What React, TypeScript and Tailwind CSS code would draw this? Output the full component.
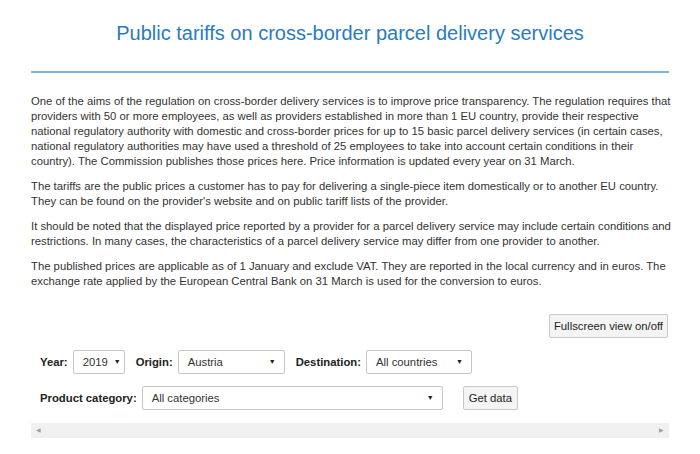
import { ReactNode } from "react";

function Select({ value, className }: { value: string; className: string }) {
  return (
    <div
      className={`flex items-center justify-between h-[24px] border border-[#c8c8c8] rounded-[2px] bg-white pl-[9px] pr-[8px] text-[11.3px] text-[#333] ${className}`}
    >
      <span>{value}</span>
      <span className="text-[7px] text-[#222] ml-[6px]">▼</span>
    </div>
  );
}

function Label({ children }: { children: ReactNode }) {
  return <span className="font-bold text-[11.3px] text-[#222] mr-[5px]">{children}</span>;
}

export default function App() {
  return (
    <div
      className="min-h-screen bg-white text-[#333]"
      style={{ fontFamily: '"Liberation Sans", Arial, sans-serif' }}
    >
      <div className="w-[638px] mx-auto pt-[20px]">
        <h1 className="text-center text-[20px] leading-[26px] text-[#2a7bc0]">
          Public tariffs on cross-border parcel delivery services
        </h1>
        <div className="mt-[25px] h-[2px] bg-[#7fb6df]" />

        <div className="mt-[21px] text-[11.3px] leading-[15px] text-[#333] space-y-[10px] whitespace-nowrap">
          <p>
            One of the aims of the regulation on cross-border delivery services is to improve price transparency. The regulation requires that
            <br />
            providers with 50 or more employees, as well as providers established in more than 1 EU country, provide their respective
            <br />
            national regulatory authority with domestic and cross-border prices for up to 15 basic parcel delivery services (in certain cases,
            <br />
            national regulatory authorities may have used a threshold of 25 employees to take into account certain conditions in their
            <br />
            country). The Commission publishes those prices here. Price information is updated every year on 31 March.
          </p>
          <p>
            The tariffs are the public prices a customer has to pay for delivering a single-piece item domestically or to another EU country.
            <br />
            They can be found on the provider's website and on public tariff lists of the provider.
          </p>
          <p>
            It should be noted that the displayed price reported by a provider for a parcel delivery service may include certain conditions and
            <br />
            restrictions. In many cases, the characteristics of a parcel delivery service may differ from one provider to another.
          </p>
          <p>
            The published prices are applicable as of 1 January and exclude VAT. They are reported in the local currency and in euros. The
            <br />
            exchange rate applied by the European Central Bank on 31 March is used for the conversion to euros.
          </p>
        </div>

        <div className="flex justify-end mt-[25px]">
          <button className="h-[24px] px-[4px] border border-[#c8c8c8] rounded-[2px] bg-[#f4f4f4] text-[11.3px] text-[#222] mr-[1px]">
            Fullscreen view on/off
          </button>
        </div>

        <div className="pl-[9px] mt-[12px]">
          <div className="flex items-center">
            <Label>Year:</Label>
            <Select value="2019" className="w-[52px]" />
            <span className="w-[11px]" />
            <Label>Origin:</Label>
            <Select value="Austria" className="w-[107px]" />
            <span className="w-[11px]" />
            <Label>Destination:</Label>
            <Select value="All countries" className="w-[106px]" />
          </div>
          <div className="flex items-center mt-[12px]">
            <Label>Product category:</Label>
            <Select value="All categories" className="w-[301px]" />
            <button className="ml-[20px] h-[24px] px-[5px] border border-[#c8c8c8] rounded-[2px] bg-[#f4f4f4] text-[11.3px] text-[#222]">
              Get data
            </button>
          </div>
        </div>

        <div className="mt-[13px] h-[15px] bg-[#f0f0f0] flex items-center justify-between px-[5px] text-[6px] text-[#a0a0a0]">
          <span>◀</span>
          <span>▶</span>
        </div>
      </div>
    </div>
  );
}
